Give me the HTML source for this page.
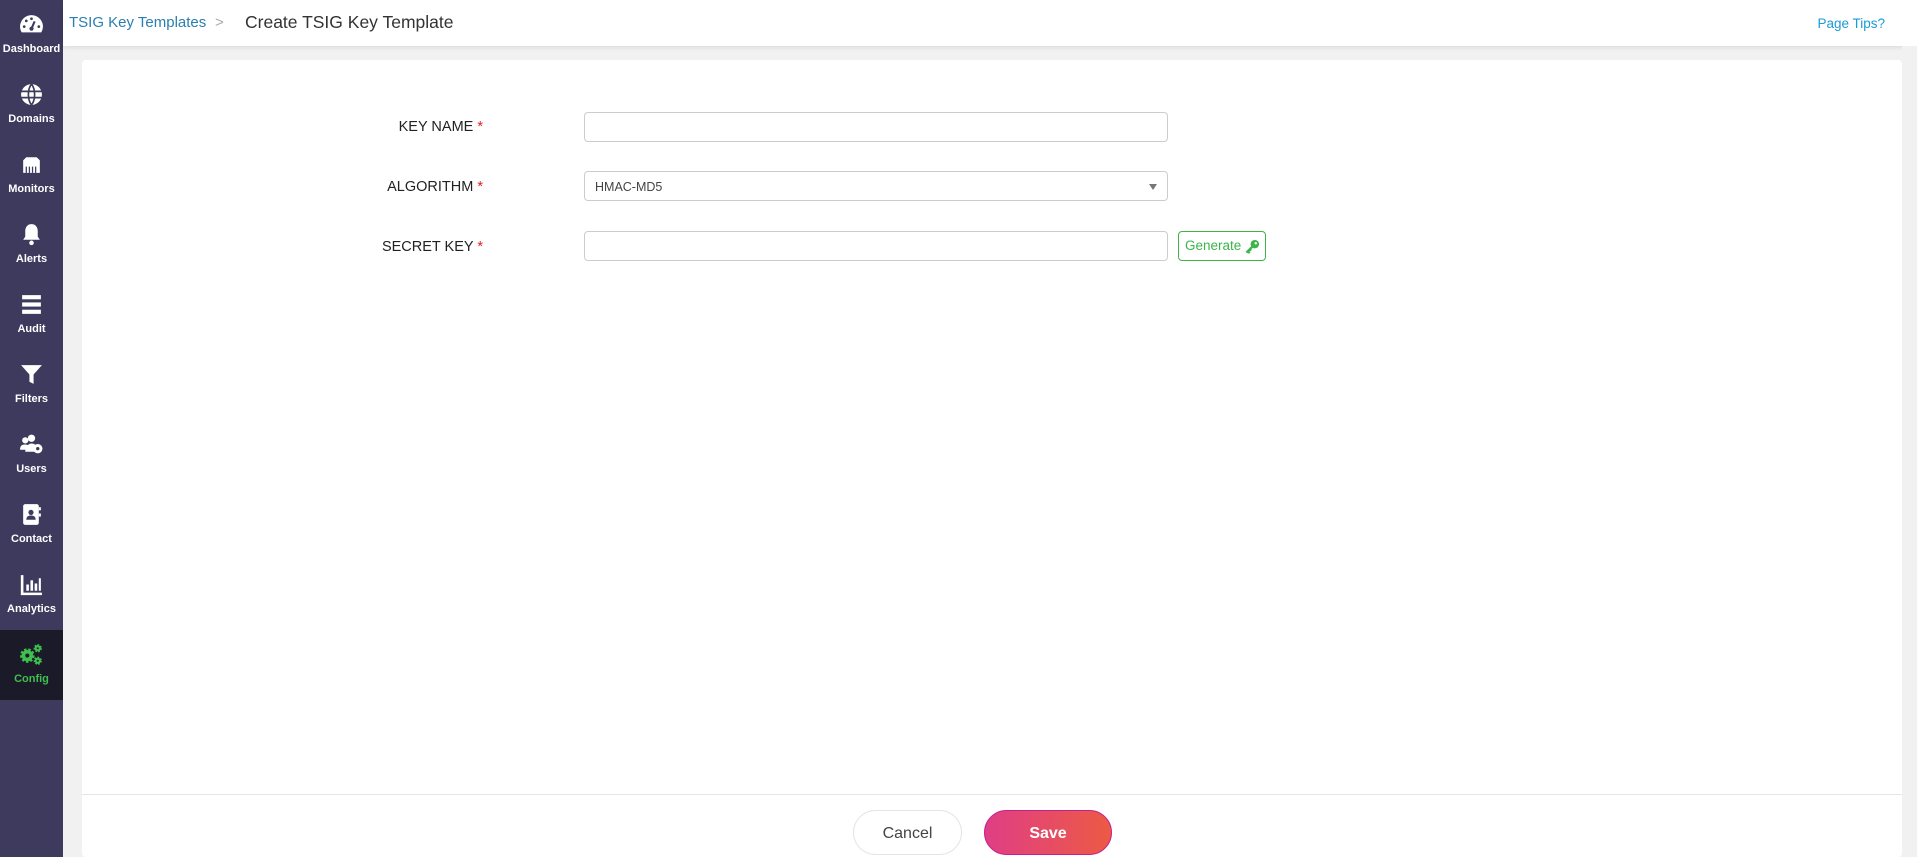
<!DOCTYPE html>
<html><head><meta charset="utf-8"><style>
*{box-sizing:border-box;margin:0;padding:0}
body{width:1917px;height:857px;overflow:hidden;background:#f1f1f1;font-family:"Liberation Sans",Arial,sans-serif;position:relative}
.side{position:absolute;left:0;top:0;width:63px;height:857px;background:#3d3a5e}
.item{position:absolute;left:0;width:63px;height:70px;color:#fff;font-size:11px;font-weight:bold;text-align:center}
.item svg{position:absolute;left:19px;top:12px;width:25px;height:25px}
.item span{position:absolute;left:0;right:0;top:43px}
.item.act{background:#1b1a28;color:#3fbf4f}
.top{position:absolute;left:63px;top:0;right:0;height:46px;background:#fff;box-shadow:0 2px 4px rgba(0,0,0,.08)}
.bc{position:absolute;left:6px;top:14px;font-size:15px;color:#2a7fb0}
.gt{position:absolute;left:152px;top:14px;font-size:15px;color:#aaa}
.title{position:absolute;left:182px;top:12px;font-size:17.5px;color:#333}
.tips{position:absolute;right:32px;top:16px;font-size:13.5px;color:#1a9ad6}
.card{position:absolute;left:82px;top:60px;width:1820px;height:797px;background:#fff;border-radius:4px}
.lbl{position:absolute;right:1419px;font-size:14.5px;color:#222;text-align:right;white-space:nowrap}
.lbl b{color:#e02020;font-weight:normal}
.inp{position:absolute;left:502px;width:584px;height:30px;border:1px solid #ccc;border-radius:4px;background:#fff}
.sel{font-size:12.5px;color:#444;padding:8px 10px}
.arr{position:absolute;right:10px;top:12px;width:0;height:0;border-left:4px solid transparent;border-right:4px solid transparent;border-top:6px solid #777}
.gen{position:absolute;left:1096px;top:171px;width:88px;height:30px;border:1px solid #3bb54a;border-radius:4px;color:#3bb54a;font-size:13.5px;padding:6px 0 0 6px}
.gen svg{position:absolute;right:5px;top:7px}
.foot{position:absolute;left:0;right:0;top:734px;border-top:1px solid #e6e6e6}
.btn{position:absolute;top:750px;height:45px;border-radius:23px;font-size:16px;text-align:center;line-height:45px}
.cancel{left:771px;width:109px;border:1px solid #e4e4e4;color:#444;background:#fff}
.save{left:902px;width:128px;background:linear-gradient(90deg,#e03e85,#ec5a44);color:#fff;font-weight:bold;border:1px solid #c6208e}
.sb{position:absolute;right:0;top:46px;width:15px;bottom:0;background:#f1f1f1}
</style></head><body>
<div class="side">
 <div class="item" style="top:0"><svg viewBox="0 0 24 24"><path fill="#fff" d="M12 3a11 11 0 0 0-11 11c0 2 .6 4 1.6 5.5h18.8A11 11 0 0 0 23 14 11 11 0 0 0 12 3z"/><circle cx="12" cy="16" r="2" fill="#3d3a5e"/><path d="M12 16l3-7" stroke="#3d3a5e" stroke-width="2"/><circle cx="5" cy="14" r="1.3" fill="#3d3a5e"/><circle cx="7" cy="8.5" r="1.3" fill="#3d3a5e"/><circle cx="12" cy="6.5" r="1.3" fill="#3d3a5e"/><circle cx="19" cy="14" r="1.3" fill="#3d3a5e"/></svg><span>Dashboard</span></div>
 <div class="item" style="top:70px"><svg viewBox="0 0 24 24"><circle cx="12" cy="12" r="10" fill="#fff"/><path d="M2 9h20M2 15h20M12 2c-4 5-4 15 0 20M12 2c4 5 4 15 0 20" stroke="#3d3a5e" stroke-width="1.6" fill="none"/></svg><span>Domains</span></div>
 <div class="item" style="top:140px"><svg viewBox="0 0 24 24"><path fill="#fff" d="M4 8l3-3h10l3 3v12H4z"/><path d="M7 14v6M10 14v6M13 14v6M16 14v6" stroke="#3d3a5e" stroke-width="1.2"/></svg><span>Monitors</span></div>
 <div class="item" style="top:210px"><svg viewBox="0 0 24 24"><path fill="#fff" d="M12 2c-4 0-6 3-6 7v5l-2 3h16l-2-3V9c0-4-2-7-6-7z"/><circle cx="12" cy="20" r="2.2" fill="#fff"/></svg><span>Alerts</span></div>
 <div class="item" style="top:280px"><svg viewBox="0 0 24 24"><rect x="3" y="3" width="18" height="4" fill="#fff"/><rect x="3" y="10" width="18" height="4" fill="#fff"/><rect x="3" y="17" width="18" height="4" fill="#fff"/></svg><span>Audit</span></div>
 <div class="item" style="top:350px"><svg viewBox="0 0 24 24"><path fill="#fff" d="M2 3h20l-8 9v9l-4-2v-7z"/></svg><span>Filters</span></div>
 <div class="item" style="top:420px"><svg viewBox="0 0 24 24"><circle cx="6" cy="8" r="3" fill="#fff"/><circle cx="12" cy="6" r="3.5" fill="#fff"/><path fill="#fff" d="M1 17c0-4 2-5 5-5s4 2 4 5zM6 19c0-5 3-8 6-8s5 2 5 4v4z"/><circle cx="18" cy="16" r="4.5" fill="#fff"/><circle cx="18" cy="16" r="1.6" fill="#3d3a5e"/></svg><span>Users</span></div>
 <div class="item" style="top:490px"><svg viewBox="0 0 24 24"><rect x="4" y="2" width="15" height="20" rx="2" fill="#fff"/><rect x="19" y="5" width="2" height="3" fill="#fff"/><rect x="19" y="11" width="2" height="3" fill="#fff"/><circle cx="11.5" cy="10" r="2.5" fill="#3d3a5e"/><path d="M7 17c0-3 2-4 4.5-4s4.5 1 4.5 4z" fill="#3d3a5e"/></svg><span>Contact</span></div>
 <div class="item" style="top:560px"><svg viewBox="0 0 24 24"><path d="M3 3v18h19" stroke="#fff" stroke-width="2.5" fill="none"/><rect x="7" y="12" width="2.5" height="6" fill="#fff"/><rect x="11" y="8" width="2.5" height="10" fill="#fff"/><rect x="15" y="11" width="2.5" height="7" fill="#fff"/><rect x="19" y="6" width="2" height="12" fill="#fff"/></svg><span>Analytics</span></div>
 <div class="item act" style="top:630px"><svg viewBox="0 0 24 24"><circle cx="8" cy="13" r="5.5" fill="#3fbf4f" stroke="#3fbf4f" stroke-width="3" stroke-dasharray="2.2 1.6"/><circle cx="8" cy="13" r="2" fill="#1b1a28"/><circle cx="18" cy="6" r="3" fill="#3fbf4f" stroke="#3fbf4f" stroke-width="2" stroke-dasharray="1.5 1.2"/><circle cx="18" cy="6" r="1" fill="#1b1a28"/><circle cx="18" cy="18" r="3" fill="#3fbf4f" stroke="#3fbf4f" stroke-width="2" stroke-dasharray="1.5 1.2"/><circle cx="18" cy="18" r="1" fill="#1b1a28"/></svg><span>Config</span></div>
</div>
<div class="top">
 <div class="bc">TSIG Key Templates</div><div class="gt">&gt;</div>
 <div class="title">Create TSIG Key Template</div>
 <div class="tips">Page Tips?</div>
</div>
<div class="sb"></div>
<div class="card">
 <div class="lbl" style="top:59px">KEY NAME <b>*</b></div>
 <div class="inp" style="top:52px"></div>
 <div class="lbl" style="top:119px">ALGORITHM <b>*</b></div>
 <div class="inp sel" style="top:111px">HMAC-MD5<div class="arr"></div></div>
 <div class="lbl" style="top:179px">SECRET KEY <b>*</b></div>
 <div class="inp" style="top:171px"></div>
 <div class="gen">Generate<svg width="15" height="15" viewBox="0 0 16 16"><circle cx="10.5" cy="5.5" r="4.5" fill="#3bb54a"/><circle cx="11.5" cy="4.5" r="1.3" fill="#fff"/><path d="M8 8L1.5 14.5M3 13l2 2M5 11l1.5 1.5" stroke="#3bb54a" stroke-width="2.4"/></svg></div>
 <div class="foot"></div>
 <div class="btn cancel">Cancel</div>
 <div class="btn save">Save</div>
</div>
</body></html>
